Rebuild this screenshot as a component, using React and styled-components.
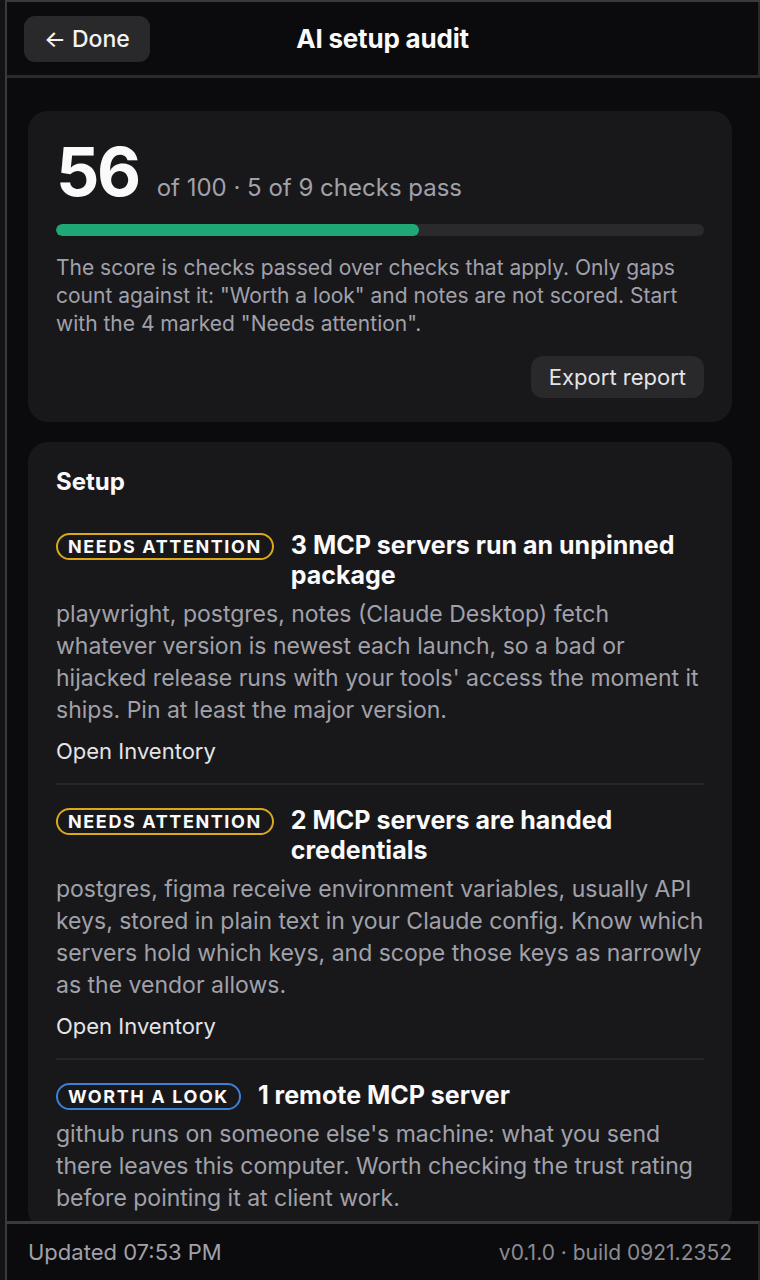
import React from 'react';
import styled, { createGlobalStyle } from 'styled-components';

const GlobalStyle = createGlobalStyle`
    html, body {
        margin: 0;
        padding: 0;
        background: #131315;
    }
    body {
        font-family: Inter, "Noto Sans", sans-serif;
        -webkit-font-smoothing: antialiased;
    }
    * { box-sizing: border-box; }
`;

const Frame = styled.div`
    display: flex;
    flex-direction: column;
    height: 1280px;
    margin-left: 5px;
    border-left: 2px solid #3a3a3d;
    border-top: 2px solid #3a3a3d;
    background: #0b0b0d;
    overflow: hidden;
`;

const Header = styled.header`
    display: grid;
    grid-template-columns: 1fr auto 1fr;
    align-items: center;
    height: 76px;
    padding: 0 17px;
    border-bottom: 3px solid #2a2a2d;
    border-right: 2px solid #2a2a2d;
    flex-shrink: 0;
`;

const BackButton = styled.button`
    justify-self: start;
    display: flex;
    align-items: center;
    gap: 6px;
    height: 46px;
    padding: 0 20px;
    border: none;
    border-radius: 11px;
    background: #29292c;
    color: #f4f4f5;
    font-family: inherit;
    font-size: 23px;
    font-weight: 500;
`;

const Title = styled.h1`
    margin: 0;
    color: #fafafa;
    font-size: 26px;
    font-weight: 700;
    letter-spacing: -0.2px;
`;

const Main = styled.main`
    flex: 1;
    overflow: hidden;
    display: flex;
    flex-direction: column;
    gap: 20px;
    padding: 33px 28px 0 21px;
`;

const Card = styled.section`
    background: #18181b;
    border-radius: 20px;
    padding: ${p => p.$pad};
    flex-shrink: 0;
`;

const ScoreRow = styled.div`
    display: flex;
    align-items: baseline;
    gap: 18px;
`;

const Score = styled.span`
    color: #fafafa;
    font-size: 68px;
    font-weight: 700;
    letter-spacing: -2.5px;
    line-height: 1;
`;

const ScoreMeta = styled.span`
    color: #a1a1aa;
    font-size: 24px;
`;

const Track = styled.div`
    margin-top: 19px;
    height: 12px;
    border-radius: 6px;
    background: #2a2a2d;
    overflow: hidden;
`;

const Fill = styled.div`
    height: 100%;
    border-radius: 6px;
    background: #1fa876;
`;

const Note = styled.p`
    margin: 18px 0 0;
    color: #a1a1aa;
    font-size: 21px;
    line-height: 28px;
`;

const Actions = styled.div`
    display: flex;
    justify-content: flex-end;
    margin-top: 18px;
`;

const GhostButton = styled.button`
    height: 42px;
    padding: 0 18px;
    border: none;
    border-radius: 12px;
    background: #29292c;
    color: #e4e4e7;
    font-family: inherit;
    font-size: 22px;
`;

const SectionTitle = styled.h2`
    margin: 0 0 34px;
    color: #fafafa;
    font-size: 24px;
    font-weight: 700;
`;

const Item = styled.div`
    padding: ${p => (p.$first ? '0' : '20px')} 0 16px;
    border-top: ${p => (p.$first ? 'none' : '2px solid #26262a')};
`;

const ItemHead = styled.div`
    display: flex;
    align-items: flex-start;
    gap: 17px;
`;

const Badge = styled.span`
    flex-shrink: 0;
    display: inline-flex;
    align-items: center;
    height: 27px;
    margin-top: 3px;
    padding: 0 10px;
    border: 2px solid ${p => p.$color};
    border-radius: 14px;
    color: #fafafa;
    font-size: 18px;
    font-weight: 700;
    letter-spacing: 1.6px;
`;

const ItemTitle = styled.h3`
    margin: 0;
    color: #fafafa;
    font-size: 25px;
    font-weight: 700;
    line-height: 30px;
`;

const ItemBody = styled.p`
    margin: 8px 0 0;
    color: #a1a1aa;
    font-size: 23px;
    line-height: 32px;
`;

const Link = styled.a`
    display: block;
    margin-top: 9px;
    color: #e4e4e7;
    font-size: 22px;
    line-height: 32px;
`;

const Footer = styled.footer`
    display: flex;
    align-items: center;
    justify-content: space-between;
    height: 59px;
    padding: 0 26px 0 21px;
    border-top: 3px solid #3a3a3d;
    border-right: 2px solid #2a2a2d;
    flex-shrink: 0;
`;

const FootText = styled.span`
    color: ${p => p.$dim ? '#8b8b92' : '#a1a1aa'};
    font-size: ${p => p.$dim ? '21px' : '22px'};
`;

const findings = [
    {
        level: 'NEEDS ATTENTION',
        color: '#d9a91a',
        title: '3 MCP servers run an unpinned package',
        body: "playwright, postgres, notes (Claude Desktop) fetch whatever version is newest each launch, so a bad or hijacked release runs with your tools' access the moment it ships. Pin at least the major version.",
        link: 'Open Inventory',
    },
    {
        level: 'NEEDS ATTENTION',
        color: '#d9a91a',
        title: '2 MCP servers are handed credentials',
        body: 'postgres, figma receive environment variables, usually API keys, stored in plain text in your Claude config. Know which servers hold which keys, and scope those keys as narrowly as the vendor allows.',
        link: 'Open Inventory',
    },
    {
        level: 'WORTH A LOOK',
        color: '#3b7fd9',
        title: '1 remote MCP server',
        body: "github runs on someone else's machine: what you send there leaves this computer. Worth checking the trust rating before pointing it at client work.",
    },
];

const App = () => {
    const score = 56;
    return (
        <Frame>
            <GlobalStyle />
            <Header>
                <BackButton>
                    <span>←</span> Done
                </BackButton>
                <Title>AI setup audit</Title>
                <span />
            </Header>

            <Main>
                <Card $pad="26px 28px 24px">
                    <ScoreRow>
                        <Score>{score}</Score>
                        <ScoreMeta>of 100 · 5 of 9 checks pass</ScoreMeta>
                    </ScoreRow>
                    <Track>
                        <Fill style={{ width: `${score}%` }} />
                    </Track>
                    <Note>
                        The score is checks passed over checks that apply. Only gaps count against it: "Worth a look" and notes are not scored. Start with the 4 marked "Needs attention".
                    </Note>
                    <Actions>
                        <GhostButton>Export report</GhostButton>
                    </Actions>
                </Card>

                <Card $pad="25px 28px 0">
                    <SectionTitle>Setup</SectionTitle>
                    {findings.map((f, i) => (
                        <Item key={f.title} $first={i === 0}>
                            <ItemHead>
                                <Badge $color={f.color}>{f.level}</Badge>
                                <ItemTitle>{f.title}</ItemTitle>
                            </ItemHead>
                            <ItemBody>{f.body}</ItemBody>
                            {f.link && <Link>{f.link}</Link>}
                        </Item>
                    ))}
                </Card>
            </Main>

            <Footer>
                <FootText>Updated 07:53 PM</FootText>
                <FootText $dim>v0.1.0 · build 0921.2352</FootText>
            </Footer>
        </Frame>
    );
};

export default App;
